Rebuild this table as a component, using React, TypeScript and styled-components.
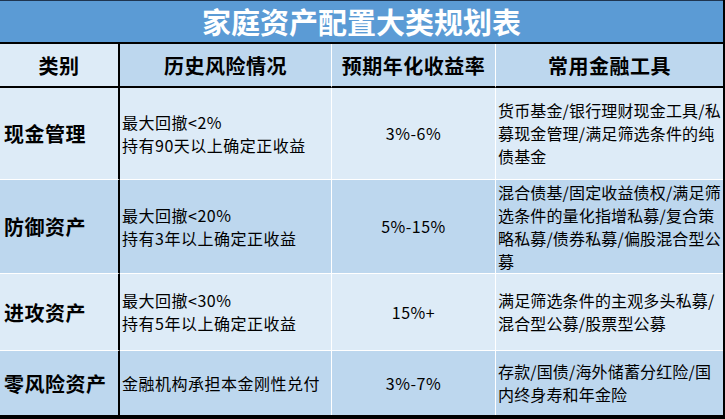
import React from "react";
import styled, { createGlobalStyle } from "styled-components";

const Global = createGlobalStyle`
  html, body { margin: 0; padding: 0; background: #ffffff; }
  body { font-family: "Noto Sans CJK SC", "Noto Sans", sans-serif; }
`;

const LIGHT = "#ddebf7";
const MID = "#bdd7ee";

const Frame = styled.div`
  width: 725px;
  height: 419px;
  box-sizing: border-box;
  border-right: 2px solid #000;
  border-bottom: 4px solid #000;
  display: flex;
  flex-direction: column;
  color: #000;
`;

const Title = styled.div`
  height: 44px;
  box-sizing: border-box;
  border-top: 1px solid #1f3550;
  border-bottom: 2px solid #000;
  background: #5b9bd5;
  color: #fff;
  font-size: 29px;
  font-weight: 700;
  display: flex;
  align-items: center;
  justify-content: center;
  letter-spacing: 0px;
  padding-bottom: 1px;
`;

const Grid = styled.div`
  display: grid;
  grid-template-columns: 120px 212px 164px 227px;
  grid-template-rows: 44px 92px 94px 77px 64px;
`;

type CellProps = {
  $bg: string;
  $right: "black" | "white" | "none";
  $bottom: "black" | "white" | "none";
  $align: "left" | "center";
};

const Cell = styled.div<CellProps>`
  box-sizing: border-box;
  background: ${(p) => p.$bg};
  border-right: ${(p) =>
    p.$right === "black" ? "2px solid #000" : p.$right === "white" ? "1px solid #fff" : "none"};
  border-bottom: ${(p) =>
    p.$bottom === "black" ? "2px solid #000" : p.$bottom === "white" ? "1px solid #fff" : "none"};
  display: flex;
  flex-direction: column;
  justify-content: center;
  align-items: ${(p) => (p.$align === "center" ? "center" : "flex-start")};
`;

const HeadText = styled.div`
  font-size: 20px;
  font-weight: 700;
  letter-spacing: 0.5px;
`;

const CategoryText = styled.div`
  font-size: 20px;
  font-weight: 700;
  padding-left: 4px;
  letter-spacing: 0.5px;
`;

const BodyText = styled.div<{ $pad: number; $spacing: number }>`
  font-size: 16px;
  line-height: 23px;
  padding-left: ${(p) => p.$pad}px;
  white-space: nowrap;
  letter-spacing: ${(p) => p.$spacing}px;
`;

const Line = styled.div``;

type Row = {
  cat: string;
  risk: string[];
  rate: string;
  tools: string[];
};

const rows: Row[] = [
  {
    cat: "现金管理",
    risk: ["最大回撤<2%", "持有90天以上确定正收益"],
    rate: "3%-6%",
    tools: ["货币基金/银行理财现金工具/私", "募现金管理/满足筛选条件的纯", "债基金"],
  },
  {
    cat: "防御资产",
    risk: ["最大回撤<20%", "持有3年以上确定正收益"],
    rate: "5%-15%",
    tools: [
      "混合债基/固定收益债权/满足筛",
      "选条件的量化指增私募/复合策",
      "略私募/债券私募/偏股混合型公",
      "募",
    ],
  },
  {
    cat: "进攻资产",
    risk: ["最大回撤<30%", "持有5年以上确定正收益"],
    rate: "15%+",
    tools: ["满足筛选条件的主观多头私募/", "混合型公募/股票型公募"],
  },
  {
    cat: "零风险资产",
    risk: ["金融机构承担本金刚性兑付"],
    rate: "3%-7%",
    tools: ["存款/国债/海外储蓄分红险/国", "内终身寿和年金险"],
  },
];

const headers = ["类别", "历史风险情况", "预期年化收益率", "常用金融工具"];

export default function App() {
  return (
    <>
      <Global />
      <Frame>
        <Title>家庭资产配置大类规划表</Title>
        <Grid>
          {headers.map((h, i) => (
            <Cell
              key={h}
              $bg={i === 0 ? LIGHT : MID}
              $right={i === 0 ? "black" : i === 3 ? "none" : "white"}
              $bottom="black"
              $align="center"
            >
              <HeadText>{h}</HeadText>
            </Cell>
          ))}
          {rows.map((r, ri) => {
            const bg = ri % 2 === 0 ? LIGHT : MID;
            const bottom = ri === rows.length - 1 ? "none" : "white";
            return (
              <React.Fragment key={r.cat}>
                <Cell $bg={bg} $right="black" $bottom={bottom} $align="left">
                  <CategoryText>{r.cat}</CategoryText>
                </Cell>
                <Cell $bg={bg} $right="white" $bottom={bottom} $align="left">
                  <BodyText $pad={2} $spacing={0.5}>
                    {r.risk.map((l) => (
                      <Line key={l}>{l}</Line>
                    ))}
                  </BodyText>
                </Cell>
                <Cell $bg={bg} $right="white" $bottom={bottom} $align="center">
                  <BodyText $pad={0} $spacing={0.5}>{r.rate}</BodyText>
                </Cell>
                <Cell $bg={bg} $right="none" $bottom={bottom} $align="left">
                  <BodyText $pad={2} $spacing={0.15}>
                    {r.tools.map((l) => (
                      <Line key={l}>{l}</Line>
                    ))}
                  </BodyText>
                </Cell>
              </React.Fragment>
            );
          })}
        </Grid>
      </Frame>
    </>
  );
}
